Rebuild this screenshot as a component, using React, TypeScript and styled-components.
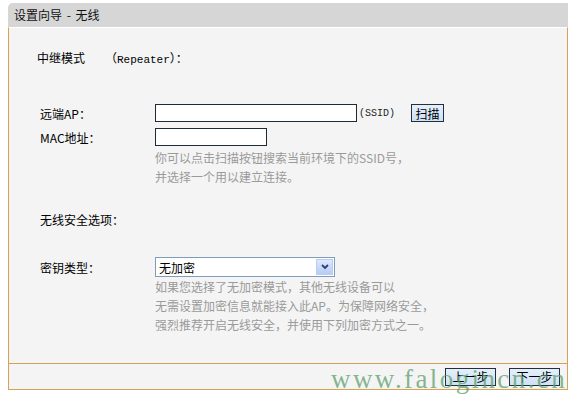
import React from 'react';
import styled, { createGlobalStyle } from 'styled-components';

const GlobalStyle = createGlobalStyle`
  body {
    margin: 0;
    background: #ffffff;
    font-family: 'Noto Sans CJK SC', 'DejaVu Sans', sans-serif;
    font-size: 12px;
    color: #000;
  }
`;

const Page = styled.div`
  position: relative;
  width: 574px;
  height: 396px;
  padding: 3px 0 0 8px;
  box-sizing: border-box;
  overflow: hidden;
`;
const Panel = styled.div`
  width: 560px;
  display: flex;
  flex-direction: column;
`;
const Header = styled.div`
  height: 24px;
  line-height: 24px;
  background: #d6d6d6;
  border-top-left-radius: 5px;
  padding-left: 6px;
  font-size: 12px;
  color: #111;
  word-spacing: 2px;
`;
const Body = styled.div`
  height: 336px;
  background: #f4f4f4;
  border-left: 1px solid #d5a352;
  border-right: 1px solid #d5a352;
  border-top: 1px solid #ffffff;
  box-sizing: border-box;
  padding-left: 31px;
  display: flex;
  flex-direction: column;
`;
const Footer = styled.div`
  height: 27px;
  background: #f4f4f4;
  border: 1px solid #d5a352;
  box-sizing: border-box;
  display: flex;
  justify-content: flex-end;
  align-items: center;
  gap: 13px;
  padding-right: 7px;
`;
const Row = styled.div<{ top: number; h?: number }>`
  display: flex;
  align-items: center;
  margin-top: ${({ top }) => top}px;
  height: ${({ h }) => h ?? 20}px;
`;
const Label = styled.div<{ shift?: number }>`
  width: 115px;
  margin-left: ${({ shift }) => shift ?? 0}px;
  flex-shrink: 0;
  color: #000;
`;
const Mode = styled.span`
  margin-left: -47px;
`;
const Mono = styled.span`
  font-family: 'Liberation Mono', monospace;
  font-size: 11px;
`;
const TextInput = styled.div<{ w: number }>`
  width: ${({ w }) => w}px;
  height: 18px;
  box-sizing: border-box;
  background: #fff;
  border: 1px solid #1e2a36;
`;
const Suffix = styled.span`
  font-family: 'Liberation Mono', monospace;
  font-size: 10px;
  color: #222;
  margin-left: 2px;
`;
const Button = styled.div<{ w: number }>`
  width: ${({ w }) => w}px;
  height: 18px;
  box-sizing: border-box;
  border: 1px solid #22303c;
  background: linear-gradient(#e4effb, #cfe1f6);
  display: flex;
  align-items: center;
  justify-content: center;
  font-size: 12px;
  color: #000;
`;
const ScanButton = styled(Button)`
  margin-left: 16px;
`;
const Hint = styled.div<{ top?: number }>`
  margin-left: 115px;
  margin-top: ${({ top }) => top ?? 0}px;
  color: #9a9a9a;
  line-height: 19px;
`;
const Select = styled.div`
  width: 180px;
  height: 20px;
  box-sizing: border-box;
  background: #fff;
  border: 1px solid #7f9db9;
  display: flex;
  align-items: center;
  justify-content: space-between;
  padding-left: 3px;
`;
const Arrow = styled.div`
  width: 17px;
  height: 16px;
  margin-right: 1px;
  background: linear-gradient(#dfe8fc, #b7cbf4);
  border: 1px solid #b9cdf1;
  box-sizing: border-box;
  display: flex;
  align-items: center;
  justify-content: center;
`;
const Watermark = styled.div`
  position: absolute;
  left: 331px;
  top: 364px;
  font-family: 'Liberation Serif', serif;
  font-size: 27px;
  letter-spacing: 2.4px;
  color: rgba(92, 160, 108, 0.75);
  white-space: nowrap;
  pointer-events: none;
`;

export default function App() {
  return (
    <>
      <GlobalStyle />
      <Page>
        <Panel>
          <Header>设置向导 - 无线</Header>
          <Body>
            <Row top={19}>
              <Label shift={-3}>中继模式</Label>
              <Mode>
                （<Mono>Repeater</Mono>）：
              </Mode>
            </Row>
            <Row top={37} h={18}>
              <Label>远端AP：</Label>
              <TextInput w={202} />
              <Suffix>(SSID)</Suffix>
              <ScanButton w={33}>扫描</ScanButton>
            </Row>
            <Row top={6} h={18}>
              <Label>MAC地址：</Label>
              <TextInput w={112} />
            </Row>
            <Hint top={2}>
              你可以点击扫描按钮搜索当前环境下的SSID号，
              <br />
              并选择一个用以建立连接。
            </Hint>
            <Row top={23}>
              <Label>无线安全选项：</Label>
            </Row>
            <Row top={28}>
              <Label>密钥类型：</Label>
              <Select>
                <span>无加密</span>
                <Arrow>
                  <svg width="8" height="6" viewBox="0 0 8 6">
                    <path d="M1 1 L4 4 L7 1" stroke="#2a3f7a" strokeWidth="1.8" fill="none" />
                  </svg>
                </Arrow>
              </Select>
            </Row>
            <Hint>
              如果您选择了无加密模式，其他无线设备可以
              <br />
              无需设置加密信息就能接入此AP。为保障网络安全，
              <br />
              强烈推荐开启无线安全，并使用下列加密方式之一。
            </Hint>
          </Body>
          <Footer>
            <Button w={51}>上一步</Button>
            <Button w={51}>下一步</Button>
          </Footer>
        </Panel>
        <Watermark>www.falogincn.cn</Watermark>
      </Page>
    </>
  );
}
